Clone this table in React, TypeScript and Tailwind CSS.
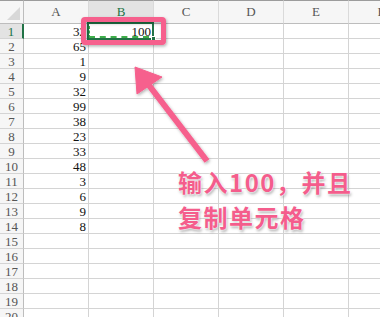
const COLS = ['A', 'B', 'C', 'D', 'E', 'F'];
const VALUES: Record<number, string> = {
  1: '32', 2: '65', 3: '1', 4: '9', 5: '32', 6: '99', 7: '38',
  8: '23', 9: '33', 10: '48', 11: '3', 12: '6', 13: '9', 14: '8',
};
const ROWS = Array.from({ length: 20 }, (_, i) => i + 1);

function HeaderRow() {
  return (
    <>
      {/* select-all corner */}
      <div className="flex h-[24px] items-end justify-end border-t border-b border-r border-t-[#9c9c9c] border-b-[#bdbdbd] border-r-[#bdbdbd] bg-[#f6f6f6] pb-[3px] pr-[3px]">
        <svg width="13" height="13" viewBox="0 0 13 13">
          <polygon points="13,0 13,13 0,13" fill="#d8d8d8" />
        </svg>
      </div>
      {COLS.map((c) => {
        const active = c === 'B';
        return (
          <div
            key={c}
            className={
              active
                ? 'flex h-[24px] items-center justify-center border-t border-r border-b-2 border-t-[#9c9c9c] border-r-[#dadada] border-b-[#217346] bg-[#e3e3e3] pt-[1px] text-[13px] text-[#217346]'
                : 'flex h-[24px] items-center justify-center border-t border-r border-b border-t-[#9c9c9c] border-r-[#dadada] border-b-[#bdbdbd] bg-[#f6f6f6] text-[13px] text-[#555]'
            }
          >
            {c}
          </div>
        );
      })}
    </>
  );
}

function Row({ n }: { n: number }) {
  const active = n === 1;
  return (
    <>
      <div
        className={
          active
            ? 'flex h-[15px] items-center justify-center border-r-2 border-b border-r-[#217346] border-b-[#d4d4d4] bg-[#e3e3e3] text-[13px] leading-none text-[#217346]'
            : 'flex h-[15px] items-center justify-center border-r border-b border-r-[#bdbdbd] border-b-[#d4d4d4] bg-[#f6f6f6] text-[13px] leading-none text-[#555]'
        }
      >
        {n}
      </div>
      {COLS.map((c) => (
        <div
          key={c}
          className="flex h-[15px] items-center justify-end border-r border-b border-[#d4d4d4] pr-[2px] text-[13px] leading-none text-[#111]"
        >
          {c === 'A' ? VALUES[n] ?? '' : c === 'B' && n === 1 ? '100' : ''}
        </div>
      ))}
    </>
  );
}

export default function App() {
  return (
    <div className="relative h-[317px] w-[380px] overflow-hidden bg-white font-['Liberation_Serif',serif]">
      <div className="grid grid-cols-[24px_repeat(6,65px)] grid-rows-[24px_repeat(20,15px)]">
        <HeaderRow />
        {ROWS.map((n) => (
          <Row key={n} n={n} />
        ))}
      </div>

      {/* active cell B1 with copy marquee */}
      <div className="pointer-events-none absolute left-[87px] top-[22px] h-[18px] w-[67px] border-2 border-[#217346]">
        <div className="absolute bottom-0 left-0 right-[3px] border-b-2 border-dashed border-b-[#3fae49]" />
        <div className="absolute bottom-0 left-0 top-[2px] border-l border-dashed border-l-[#3fae49]" />
      </div>
      <div className="absolute left-[151px] top-[36px] h-[5px] w-[5px] border border-white bg-[#217346]" />

      {/* callout: box + arrow */}
      <svg className="pointer-events-none absolute left-0 top-0" width="380" height="317" viewBox="0 0 380 317">
        <defs>
          <filter id="soft" x="-20%" y="-20%" width="140%" height="140%">
            <feDropShadow dx="1" dy="1.5" stdDeviation="1.5" floodColor="#000" floodOpacity="0.3" />
          </filter>
        </defs>
        <g filter="url(#soft)" fill="none" stroke="#f6608d">
          <rect x="83.5" y="19.5" width="80" height="23" rx="1.5" strokeWidth="5" />
          <line x1="148" y1="84" x2="207" y2="161" strokeWidth="6" strokeLinecap="butt" />
          <polygon points="135,67 162,77 137,94" fill="#f6608d" strokeWidth="1" strokeLinejoin="round" />
        </g>
      </svg>

      <div className="absolute left-[178px] top-[164px] font-['Noto_Sans_CJK_SC',sans-serif] text-[24px] font-bold leading-[35px] tracking-[1.5px] text-[#f45d8c] [text-shadow:0_0_2px_#fff,0_0_2px_#fff,1px_2px_3px_rgba(0,0,0,0.35)]">
        <div>输入100，并且</div>
        <div>复制单元格</div>
      </div>
    </div>
  );
}
